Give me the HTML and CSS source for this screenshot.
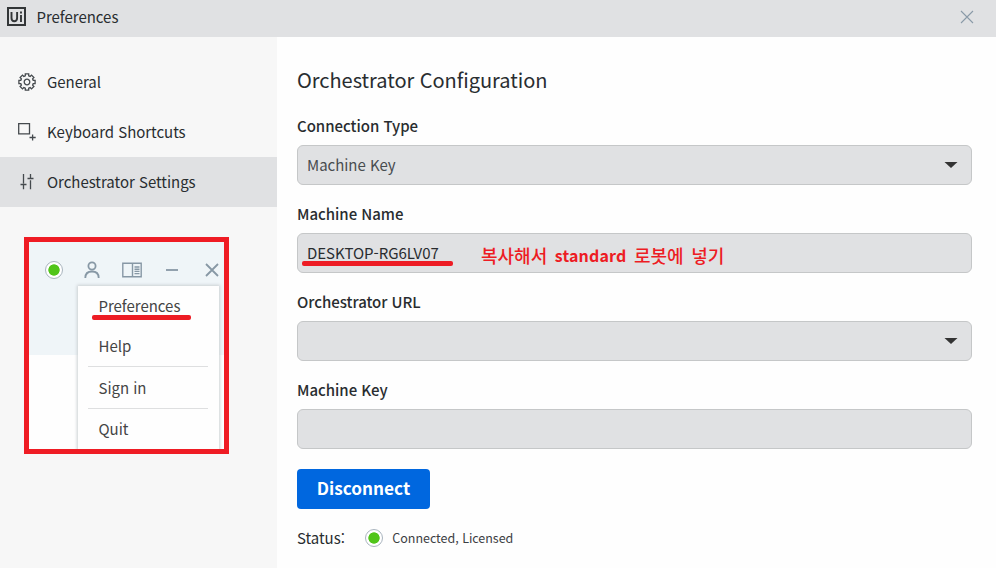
FILE: index.html
```
<!DOCTYPE html>
<html lang="ko">
<head>
<meta charset="utf-8">
<title>Preferences</title>
<link rel="stylesheet" href="styles.css">
</head>
<body>
<header class="titlebar">
  <svg class="logo" width="20" height="20" viewBox="0 0 20 20"><rect x="1" y="1" width="17" height="17" fill="none" stroke="#333638" stroke-width="2"/><path d="M4.500 5v6q0 3.200 2.800 3.200T10.100 11V5M14 8v7M14 4.500v2" fill="none" stroke="#333638" stroke-width="1.900"/></svg>
  <span class="title">Preferences</span>
  <svg class="close" width="14" height="14" viewBox="0 0 14 14"><path d="M1 1l12 12M13 1L1 13" stroke="#8a9aa8" stroke-width="1.100"/></svg>
</header>
<div class="body">
  <aside class="sidebar">
    <nav>
      <a class="nav-item"><svg width="20" height="20" viewBox="-10 -10 20 20" class="line"><path d="M6.200-1.700 8.100-1.700 8.100 1.700 6.200 1.700 5.600 3.200 6.900 4.500 4.500 6.900 3.200 5.600 1.700 6.200 1.700 8.100-1.700 8.100-1.700 6.200-3.200 5.600-4.500 6.900-6.900 4.500-5.600 3.200-6.200 1.700-8.100 1.700-8.100-1.700-6.200-1.700-5.600-3.200-6.900-4.500-4.500-6.900-3.200-5.600-1.700-6.200-1.700-8.100 1.700-8.100 1.700-6.200 3.200-5.600 4.500-6.900 6.900-4.500 5.600-3.200Z"/><circle r="2.800"/></svg><span>General</span></a>
      <a class="nav-item"><svg width="20" height="20" viewBox="0 0 20 20" class="line"><path d="M1.700 1.600h10.800v10.300H1.700zM12.500 15.500h6.200M15.600 12.500v6"/></svg><span>Keyboard Shortcuts</span></a>
      <a class="nav-item active"><svg width="20" height="20" viewBox="0 0 20 20" class="line"><path d="M6.500 2v9.500M3.500 12.500h6M6.500 12.500v4.800M13.500 2v4.500M10.500 6.500h6M13.500 8.300v9"/></svg><span>Orchestrator Settings</span></a>
    </nav>
    <section class="tray">
      <div class="tray-icons">
        <i class="dot"></i>
        <svg width="18" height="20" viewBox="0 0 18 20"><circle cx="9" cy="6" r="3.600"/><path d="M2.300 18c0-4.500 3-6.500 6.700-6.500s6.700 2 6.700 6.500"/></svg>
        <svg width="20" height="20" viewBox="0 0 20 20"><path d="M.8 3.300h18.400v13.400H.8zM10.500 3.500v13M12.500 7h5M12.500 9.200h5M12.500 11.400h5M12.500 13.600h5" stroke-width="1.400"/></svg>
        <svg width="14" height="20" viewBox="0 0 14 20"><path d="M1 10h12"/></svg>
        <svg width="14" height="20" viewBox="0 0 14 20"><path d="M1 4l12 12M13 4l-12 12"/></svg>
      </div>
      <div class="menu">
        <div class="menu-item first"><span>Preferences</span><i class="mark"></i></div>
        <div class="menu-item help"><span>Help</span></div>
        <div class="menu-item signin"><span>Sign in</span></div>
        <div class="menu-item quit"><span>Quit</span></div>
      </div>
    </section>
  </aside>
  <main class="content">
    <h1>Orchestrator Configuration</h1>
    <label>Connection Type</label>
    <div class="field"><span class="value muted">Machine Key</span><svg class="caret" width="14" height="8" viewBox="0 0 14 8"><path d="M.5 1h13L7 7z"/></svg></div>
    <label>Machine Name</label>
    <div class="field"><span class="value">DESKTOP-RG6LV07</span><i class="mark"></i><span class="note"><span>복사해서</span><b>standard</b><span>로봇에</span><span>넣기</span></span></div>
    <label>Orchestrator URL</label>
    <div class="field"><svg class="caret" width="14" height="8" viewBox="0 0 14 8"><path d="M.5 1h13L7 7z"/></svg></div>
    <label>Machine Key</label>
    <div class="field"></div>
    <button>Disconnect</button>
    <div class="status"><span>Status:</span><i class="dot"></i><span class="status-text">Connected, Licensed</span></div>
  </main>
</div>
</body>
</html>
```
FILE: styles.css
```
* { box-sizing: border-box; }
body {
  margin: 0;
  width: 996px;
  height: 568px;
  overflow: hidden;
  background: #fefefe;
  color: #292d30;
  font: 15px/20px "Noto Sans CJK KR", sans-serif;
  letter-spacing: -0.03px;
  white-space: nowrap;
}
svg { display: block; flex: none; }
.titlebar {
  display: flex;
  align-items: center;
  height: 37px;
  padding: 0 22px 3px 7px;
  background: #e0e1e3;
}
.title { margin-left: 9.5px; }
.close { margin-left: auto; }
.body { display: flex; height: 531px; }
.sidebar { width: 277px; background: #f7f7f7; padding-top: 20px; }
.nav-item {
  display: flex;
  align-items: center;
  gap: 10px;
  height: 50px;
  padding-left: 17px;
}
.active { background: #e0e1e3; }
.line { fill: none; stroke: #454a4e; stroke-width: 1.3; }
.tray {
  width: 205px;
  height: 217px;
  margin: 30px 0 0 24px;
  border: 5px solid #ef1c24;
  background: linear-gradient(#eff5f8 113px, #fefefe 113px);
  overflow: hidden;
}
.tray-icons {
  display: flex;
  align-items: center;
  height: 43px;
  padding: 13px 5px 0 16px;
}
.tray-icons svg { fill: none; stroke: #8798a5; stroke-width: 1.8; }
.tray-icons svg:nth-of-type(1) { margin-left: 20px; }
.tray-icons svg:nth-of-type(2) { margin-left: 21px; }
.tray-icons svg:nth-of-type(3) { margin-left: 23px; }
.tray-icons svg:nth-of-type(4) { margin-left: 26px; }
.dot {
  width: 18px;
  height: 18px;
  flex: none;
  border: 1px solid #aab5bf;
  border-radius: 50%;
  background: radial-gradient(circle, #51c51a 5.3px, #fff 6px);
}
.menu {
  width: 141px;
  height: 170px;
  margin: 1px 0 0 49px;
  padding: 0 11px 0 10px;
  background: #fefefe;
  box-shadow: 0 0 3px 1px #cbd0d3;
  color: #454545;
}
.menu-item {
  position: relative;
  display: flex;
  align-items: center;
  height: 41px;
  padding: 0 0 2px 10.5px;
}
.help { height: 40px; border-bottom: 1px solid #dedfe0; }
.signin { height: 42px; padding-bottom: 0; border-bottom: 1px solid #dedfe0; }
.mark {
  position: absolute;
  height: 5px;
  border-radius: 2px;
  background: #ed1c24;
}
.menu .mark { left: 4px; top: 29px; width: 99px; }
.content { width: 719px; padding: 28px 24px 0 20px; }
h1 { margin: 0 0 21px; font-size: 20px; font-weight: 400; line-height: 30px; }
label { display: block; height: 20px; margin-bottom: 9px; font-weight: 500; }
.field {
  position: relative;
  display: flex;
  align-items: center;
  height: 40px;
  margin-bottom: 19px;
  padding: 0 13px 0 9px;
  border: 1px solid #c5c7c8;
  border-radius: 6px;
  background: #e0e1e3;
}
.muted { color: #484c4f; }
.caret { margin-left: auto; fill: #333; }
.field .mark { left: 4px; top: 27px; width: 151px; }
.note {
  position: absolute;
  left: 183px;
  top: 11px;
  display: flex;
  gap: 7.5px;
  color: #ed1c24;
  font-size: 18px;
  font-weight: 500;
  letter-spacing: 0;
}
.note b { font-size: 16px; letter-spacing: 0.15px; }
button {
  display: block;
  width: 133px;
  height: 40px;
  margin-top: 20px;
  padding: 0 0 2px;
  border: 0;
  border-radius: 4px;
  background: #0067df;
  color: #fff;
  font: 700 17.2px/38px "Noto Sans CJK KR", sans-serif;
}
.status { display: flex; align-items: center; height: 20px; margin-top: 19px; }
.status .dot { margin-left: 20px; }
.status-text { margin-left: 9.5px; color: #3c4043; font-size: 12.5px; }
```
